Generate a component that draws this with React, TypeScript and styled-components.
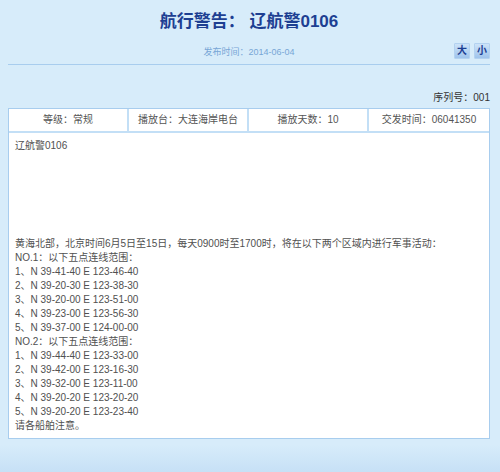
import React from "react";
import styled, { createGlobalStyle } from "styled-components";

const GlobalStyle = createGlobalStyle`
  html, body {
    margin: 0;
    padding: 0;
  }
  body {
    min-height: 472px;
    background: linear-gradient(to bottom, #d7ecfa 0%, #d7ecfa 94%, #c6e0f6 100%);
    font-family: "Liberation Sans", "Noto Sans CJK SC", sans-serif;
  }
`;

const Page = styled.div`
  padding: 10px 10px 34px 8px;
`;

const Header = styled.div`
  border-bottom: 1px solid #a8cdee;
  padding-bottom: 5px;
`;

const Title = styled.h1`
  margin: 0;
  font-size: 17px;
  line-height: 24px;
  font-weight: bold;
  color: #1d3f92;
  text-align: center;
`;

const InfoRow = styled.div`
  display: grid;
  grid-template-columns: 1fr auto 1fr;
  align-items: center;
  margin-top: 9px;
  height: 16px;
`;

const PublishDate = styled.div`
  grid-column: 2;
  font-size: 9px;
  color: #78a6d6;
`;

const SizeButtons = styled.div`
  grid-column: 3;
  justify-self: end;
  display: flex;
  gap: 4px;
`;

const SizeButton = styled.button`
  width: 16px;
  height: 16px;
  padding: 0;
  border: 1px solid #b3d2f0;
  border-radius: 1px;
  background: linear-gradient(to bottom, #cde3f8, #9fc4ec);
  color: #1d3f92;
  font-size: 10px;
  font-weight: bold;
  font-family: "Liberation Sans", "Noto Sans CJK SC", sans-serif;
  line-height: 14px;
  cursor: pointer;
`;

const Serial = styled.div`
  margin-top: 26px;
  text-align: right;
  font-size: 10px;
  line-height: 14px;
  color: #333;
`;

const Sheet = styled.div`
  margin-top: 3px;
  border: 1px solid #a8cdee;
  background: #fff;
`;

const MetaRow = styled.div`
  display: grid;
  grid-template-columns: repeat(4, 1fr);
  border-bottom: 2px solid #c3dff6;
`;

const MetaCell = styled.div<{ $last?: boolean }>`
  height: 22px;
  line-height: 22px;
  text-align: center;
  font-size: 10px;
  color: #555;
  border-right: ${(p) => (p.$last ? "none" : "2px solid #c3dff6")};
`;

const Body = styled.div`
  padding: 6px 6px 5px;
  font-size: 10px;
  line-height: 14px;
  color: #505050;
`;

const Line = styled.div`
  min-height: 14px;
`;

const meta = ["等级：常规", "播放台：大连海岸电台", "播放天数：10", "交发时间：06041350"];

const lines = [
  "辽航警0106",
  "",
  "",
  "",
  "",
  "",
  "",
  "黄海北部，北京时间6月5日至15日，每天0900时至1700时，将在以下两个区域内进行军事活动：",
  "NO.1：以下五点连线范围：",
  "1、N 39-41-40 E 123-46-40",
  "2、N 39-20-30 E 123-38-30",
  "3、N 39-20-00 E 123-51-00",
  "4、N 39-23-00 E 123-56-30",
  "5、N 39-37-00 E 124-00-00",
  "NO.2：以下五点连线范围：",
  "1、N 39-44-40 E 123-33-00",
  "2、N 39-42-00 E 123-16-30",
  "3、N 39-32-00 E 123-11-00",
  "4、N 39-20-20 E 123-20-20",
  "5、N 39-20-20 E 123-23-40",
  "请各船舶注意。",
];

const App = () => {
  return (
    <>
      <GlobalStyle />
      <Page>
        <Header>
          <Title>航行警告： 辽航警0106</Title>
          <InfoRow>
            <PublishDate>发布时间：2014-06-04</PublishDate>
            <SizeButtons>
              <SizeButton>大</SizeButton>
              <SizeButton>小</SizeButton>
            </SizeButtons>
          </InfoRow>
        </Header>
        <Serial>序列号：001</Serial>
        <Sheet>
          <MetaRow>
            {meta.map((m, i) => (
              <MetaCell key={m} $last={i === meta.length - 1}>
                {m}
              </MetaCell>
            ))}
          </MetaRow>
          <Body>
            {lines.map((l, i) => (
              <Line key={i}>{l}</Line>
            ))}
          </Body>
        </Sheet>
      </Page>
    </>
  );
};

export default App;
